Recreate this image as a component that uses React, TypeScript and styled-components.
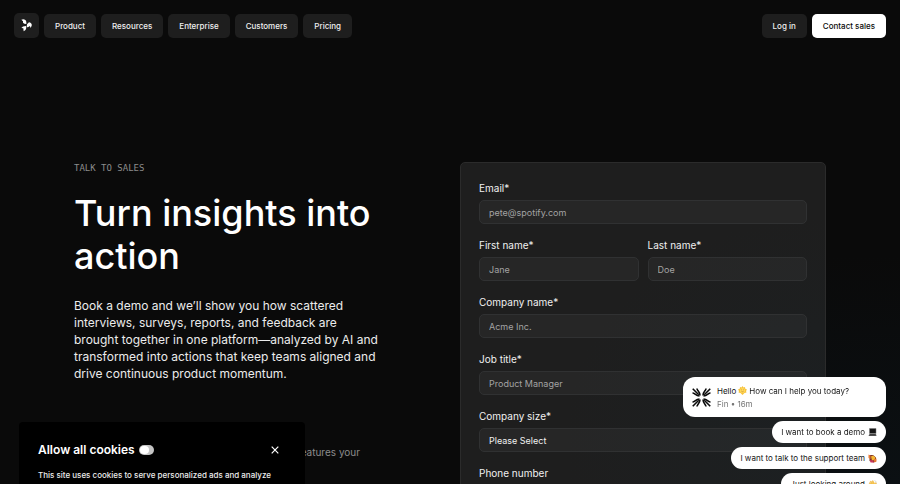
import React from "react";
import styled, { createGlobalStyle, css } from "styled-components";

const GlobalStyle = createGlobalStyle`
  *, *::before, *::after { box-sizing: border-box; }
  body {
    margin: 0;
    background: #0a0a0a;
    color: #fff;
    font-family: Inter, "Liberation Sans", sans-serif;
    -webkit-font-smoothing: antialiased;
  }
  button, input, select { font: inherit; color: inherit; }
  h1, h2, p { margin: 0; }
`;

const Page = styled.div`
  height: 100vh;
  overflow: hidden;
  background: radial-gradient(ellipse 420px 230px at 100% 100%, #0b1013, #0a0a0a);
`;

const Header = styled.header`
  display: flex;
  align-items: center;
  justify-content: space-between;
  padding: 13px 14px;
`;

const Group = styled.div`
  display: flex;
  align-items: center;
  gap: 5px;
`;

const LogoLink = styled.a`
  display: grid;
  place-items: center;
  width: 25px;
  height: 25px;
  border-radius: 5px;
  background: #1e1e1e;
`;

const pill = css`
  display: flex;
  align-items: center;
  height: 24px;
  padding: 0 11px;
  border: 0;
  border-radius: 5px;
  font-size: 8px;
  font-weight: 500;
  white-space: nowrap;
`;

const NavButton = styled.button`
  ${pill}
  background: #1e1e1e;
  color: #f0f0f0;
`;

const NavLink = styled.a<{ $primary?: boolean }>`
  ${pill}
  text-decoration: none;
  background: ${(p) => (p.$primary ? "#fff" : "#1e1e1e")};
  color: ${(p) => (p.$primary ? "#0a0a0a" : "#f0f0f0")};
`;

const Main = styled.main`
  display: grid;
  grid-template-columns: 1fr 1fr;
  gap: 20px;
  padding: 111px 74px 0;
`;

const Intro = styled.section`
  display: flex;
  flex-direction: column;
`;

const Eyebrow = styled.p`
  font: 9px/12px "DejaVu Sans Mono", monospace;
  color: #8c8c8c;
  text-transform: uppercase;
`;

const Title = styled.h1`
  margin-top: 18px;
  font-size: 36px;
  line-height: 43px;
  font-weight: 500;
`;

const Lead = styled.p`
  max-width: 306px;
  margin-top: 19px;
  font-size: 12px;
  line-height: 17px;
  color: #ececec;
`;

const Note = styled.p`
  width: 286px;
  margin-top: 63px;
  font-size: 10px;
  line-height: 14px;
  text-align: right;
  color: #8c8c8c;
`;

const Form = styled.form`
  display: grid;
  grid-template-columns: 1fr 1fr;
  gap: 15px 9px;
  padding: 19px 18px;
  border: 1px solid #2b2b2b;
  border-radius: 5px;
  background: radial-gradient(ellipse 260px 220px at 100% 75%, #1c2022, #1e1e1e);
`;

const Field = styled.div<{ $half?: boolean }>`
  display: flex;
  flex-direction: column;
  gap: 5px;
  min-width: 0;
  grid-column: ${(p) => (p.$half ? "auto" : "1 / -1")};
`;

const Label = styled.label`
  font-size: 10px;
  line-height: 13px;
  color: #f0f0f0;
`;

const control = css`
  width: 100%;
  height: 24px;
  padding: 0 9px;
  border: 1px solid #303132;
  border-radius: 5px;
  background: rgba(255, 255, 255, 0.04);
  font-size: 9px;
  outline: none;
`;

const Input = styled.input`
  ${control}
  &::placeholder { color: #a3a3a3; opacity: 1; }
`;

const Select = styled.select`
  ${control}
  appearance: none;
  color: #f0f0f0;
`;

const CookieBanner = styled.aside`
  position: fixed;
  left: 19px;
  bottom: 0;
  width: 286px;
  height: 62px;
  overflow: hidden;
  padding: 19px 19px 0;
  border-radius: 4px 4px 0 0;
  background: #000;
`;

const CookieHead = styled.div`
  display: flex;
  align-items: center;
  justify-content: space-between;
  height: 18px;
`;

const CookieLabel = styled.label`
  display: flex;
  align-items: center;
  gap: 4px;
  font-size: 12px;
  line-height: 18px;
  font-weight: 600;
`;

const Toggle = styled.input`
  appearance: none;
  display: flex;
  align-items: center;
  width: 15px;
  height: 10px;
  margin: 0;
  border-radius: 5px;
  background: #c4c4c4;
  &::before {
    content: "";
    width: 9px;
    height: 8px;
    margin-left: 1px;
    border-radius: 4px;
    background: #fff;
  }
`;

const CloseButton = styled.button`
  display: grid;
  place-items: center;
  width: 23px;
  height: 18px;
  padding: 0;
  border: 0;
  background: none;
`;

const CookieText = styled.p`
  margin-top: 10px;
  font-size: 8px;
  line-height: 12px;
  font-weight: 500;
  white-space: nowrap;
  color: #ececec;
`;

const Chat = styled.aside`
  position: fixed;
  right: 14px;
  bottom: -11px;
  display: flex;
  flex-direction: column;
  align-items: flex-end;
  gap: 4px;
  color: #151515;
  font-size: 8px;
`;

const Message = styled.div`
  display: flex;
  align-items: center;
  gap: 6px;
  width: 203px;
  height: 40px;
  padding: 0 9px;
  border-radius: 12px;
  background: #fff;
`;

const MessageBody = styled.div`
  display: flex;
  flex-direction: column;
  gap: 1px;
  line-height: 12px;
`;

const Line = styled.p`
  display: flex;
  align-items: center;
  gap: 2px;
`;

const Meta = styled.p`
  font-size: 8px;
  color: #757575;
`;

const Reply = styled.button`
  display: flex;
  align-items: center;
  gap: 3px;
  height: 22px;
  padding: 0 9px;
  border: 0;
  border-radius: 11px;
  background: #fff;
`;

const Logo = () => (
  <svg width="11" height="13" viewBox="0 0 33 39" fill="#fff" aria-hidden="true">
    <path d="M1 2q7-3 12 1 3 3 3 7v5q-7 0-10-4V7z" />
    <path d="M18 16l6-6q5 0 8 5v6l-4 6-1-6-5 3q-3 1-5 0z" />
    <path d="M1 27q3-6 14-6l1 6q-1 7-8 10l-1-9z" />
  </svg>
);

const Close = () => (
  <svg width="8" height="8" viewBox="0 0 8 8" stroke="#fff" strokeWidth="1.2" aria-hidden="true">
    <path d="M.7.7l6.600 6.600M7.300.7L.7 7.300" />
  </svg>
);

const FinMark = () => (
  <svg width="19" height="19" viewBox="0 0 38 38" fill="none" stroke="#0a0a0a" strokeWidth="3.200" aria-hidden="true">
    {[0, 90, 180, 270].map((angle) => (
      <g key={angle} transform={`rotate(${angle} 19 19)`}>
        <path d="M1.500 1.500l12 12" />
        <path d="M10 1c0 5 6 6 6 14" />
        <path d="M1 10c5 0 6 6 14 6" />
      </g>
    ))}
  </svg>
);

const Sun = () => (
  <svg width="9" height="9" viewBox="0 0 18 18" aria-hidden="true">
    <path d="M9 0l2 3 3-1 .5 3.500L18 7l-2 3 1 3-4 1-4 4-4-4-4-1 1-3-2-3 3.500-1.500L4 2l3 1z" fill="#f8c33b" />
    <circle cx="9" cy="9" r="5" fill="#ffd95c" />
    <path d="M6.500 10q2.500 3 5 0" stroke="#a86a16" fill="none" />
    <path d="M7 7v1M11 7v1" stroke="#a86a16" />
  </svg>
);

const Laptop = () => (
  <svg width="9" height="9" viewBox="0 0 18 18" aria-hidden="true">
    <path d="M3 1h13v10H3z" fill="#161616" stroke="#777" />
    <path d="M3 12h13l1 4H1z" fill="#555" />
    <path d="M4 13.500h10" stroke="#222" />
  </svg>
);

const Raised = () => (
  <svg width="9" height="9" viewBox="0 0 18 18" aria-hidden="true">
    <path d="M3 2h7l6 5v8l-5 2-8-3z" fill="#7b3328" />
    <path d="M6 5l4-2 5 4-2 5-5 1z" fill="#f5b62e" />
    <path d="M1 1l4 2v7l-4-2zM11 11l6-2v6l-4 2z" fill="#ea7a35" />
    <path d="M4 12l6 1 2 4H5z" fill="#c9355e" />
  </svg>
);

const Wave = () => (
  <svg width="9" height="9" viewBox="0 0 18 18" aria-hidden="true">
    <path d="M2 6l2-1 3 3-3-5 2-1 4 5-2-5 2-1 4 7 1-3 2 1-1 7-4 4-4-1z" fill="#fbc84b" stroke="#dda031" strokeWidth=".6" />
    <path d="M13 1q3 1 4 4M1 13q1 3 4 4" fill="none" stroke="#b8b8b8" />
  </svg>
);

const menus = ["Product", "Resources", "Enterprise", "Customers", "Pricing"];

const fields = [
  { id: "email", label: "Email*", placeholder: "pete@spotify.com", type: "email" },
  { id: "first", label: "First name*", placeholder: "Jane", half: true },
  { id: "last", label: "Last name*", placeholder: "Doe", half: true },
  { id: "company", label: "Company name*", placeholder: "Acme Inc." },
  { id: "job", label: "Job title*", placeholder: "Product Manager" },
];

const replies = [
  { text: "I want to book a demo", icon: <Laptop /> },
  { text: "I want to talk to the support team", icon: <Raised /> },
  { text: "Just looking around", icon: <Wave /> },
];

export default function App() {
  return (
    <Page>
      <GlobalStyle />
      <Header>
        <Group as="nav">
          <LogoLink href="#" aria-label="Home"><Logo /></LogoLink>
          {menus.map((name) => <NavButton key={name} type="button">{name}</NavButton>)}
        </Group>
        <Group>
          <NavLink href="#login">Log in</NavLink>
          <NavLink href="#sales" $primary>Contact sales</NavLink>
        </Group>
      </Header>

      <Main>
        <Intro>
          <Eyebrow>Talk to sales</Eyebrow>
          <Title>Turn insights into action</Title>
          <Lead>
            Book a demo and we’ll show you how scattered interviews, surveys, reports, and feedback are
            brought together in one platform—analyzed by AI and transformed into actions that keep teams
            aligned and drive continuous product momentum.
          </Lead>
          <Note>features your</Note>
        </Intro>

        <Form>
          {fields.map((f) => (
            <Field key={f.id} $half={f.half}>
              <Label htmlFor={f.id}>{f.label}</Label>
              <Input id={f.id} type={f.type ?? "text"} placeholder={f.placeholder} />
            </Field>
          ))}
          <Field>
            <Label htmlFor="size">Company size*</Label>
            <Select id="size"><option>Please Select</option></Select>
          </Field>
          <Field>
            <Label htmlFor="phone">Phone number</Label>
            <Input id="phone" type="tel" />
          </Field>
        </Form>
      </Main>

      <CookieBanner>
        <CookieHead>
          <CookieLabel>
            Allow all cookies
            <Toggle type="checkbox" role="switch" />
          </CookieLabel>
          <CloseButton type="button" aria-label="Close"><Close /></CloseButton>
        </CookieHead>
        <CookieText>This site uses cookies to serve personalized ads and analyze</CookieText>
      </CookieBanner>

      <Chat>
        <Message>
          <FinMark />
          <MessageBody>
            <Line>Hello <Sun /> How can I help you today?</Line>
            <Meta>Fin • 16m</Meta>
          </MessageBody>
        </Message>
        {replies.map((r) => <Reply key={r.text} type="button">{r.text} {r.icon}</Reply>)}
      </Chat>
    </Page>
  );
}
